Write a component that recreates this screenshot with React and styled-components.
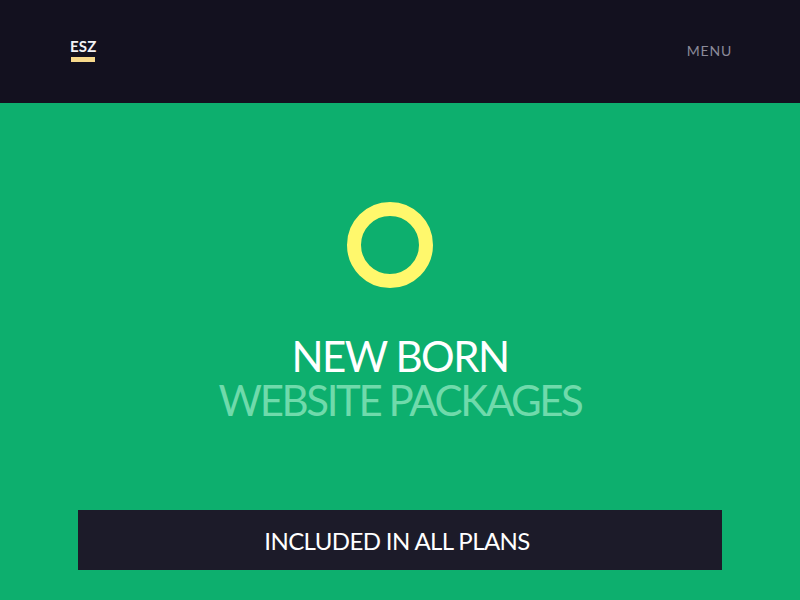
import React from "react";
import styled, { createGlobalStyle } from "styled-components";

const Global = createGlobalStyle`
  html, body { margin: 0; padding: 0; background: #0daf6e; }
  body { font-family: "Lato", "Liberation Sans", sans-serif; }
`;

const Page = styled.div`
  width: 800px;
  height: 600px;
  display: flex;
  flex-direction: column;
  overflow: hidden;
`;

const Header = styled.header`
  height: 103px;
  background: #13111f;
  display: flex;
  align-items: flex-start;
  justify-content: space-between;
  padding: 0 68px 0 70px;
  box-sizing: border-box;
`;

const Logo = styled.div`
  margin-top: 38px;
  display: flex;
  flex-direction: column;
  align-items: flex-start;
  color: #f2f2f5;
  font-weight: 700;
  font-size: 15px;
  letter-spacing: 0.2px;
  line-height: 16px;
  &::after {
    content: "";
    display: block;
    width: 24px;
    height: 5px;
    margin-top: 3px;
    margin-left: 1px;
    background: #f7d98c;
  }
`;

const Menu = styled.div`
  margin-top: 42px;
  color: #8b8a99;
  font-size: 14px;
  letter-spacing: 0.8px;
  line-height: 18px;
`;

const Hero = styled.main`
  flex: 1;
  background: #0daf6e;
  display: flex;
  flex-direction: column;
  align-items: center;
`;

const Ring = styled.div`
  margin-top: 99px;
  margin-right: 20px;
  width: 86px;
  height: 86px;
  box-sizing: border-box;
  border-radius: 50%;
  border: 14px solid #fff86c;
`;

const Heading = styled.h1`
  margin: 46px 0 0;
  font-weight: 400;
  font-size: 42px;
  line-height: 44px;
  text-align: center;
  display: flex;
  flex-direction: column;
  align-items: center;
`;

const Line = styled.span`
  display: block;
  letter-spacing: ${(p) => (p.$muted ? "-2.4px" : "-1.5px")};
  color: ${(p) => (p.$muted ? "#6fdaab" : "#ffffff")};
`;

const Bar = styled.div`
  margin-top: auto;
  margin-bottom: 30px;
  width: 644px;
  height: 60px;
  background: #1c1b29;
  display: flex;
  align-items: center;
  justify-content: center;
  color: #ffffff;
  font-size: 24px;
  letter-spacing: -0.6px;
  padding-right: 6px;
  box-sizing: border-box;
`;

export default function App() {
  return (
    <>
      <Global />
      <Page>
        <Header>
          <Logo>ESZ</Logo>
          <Menu>MENU</Menu>
        </Header>
        <Hero>
          <Ring />
          <Heading>
            <Line>NEW BORN</Line>
            <Line $muted>WEBSITE PACKAGES</Line>
          </Heading>
          <Bar>INCLUDED IN ALL PLANS</Bar>
        </Hero>
      </Page>
    </>
  );
}
